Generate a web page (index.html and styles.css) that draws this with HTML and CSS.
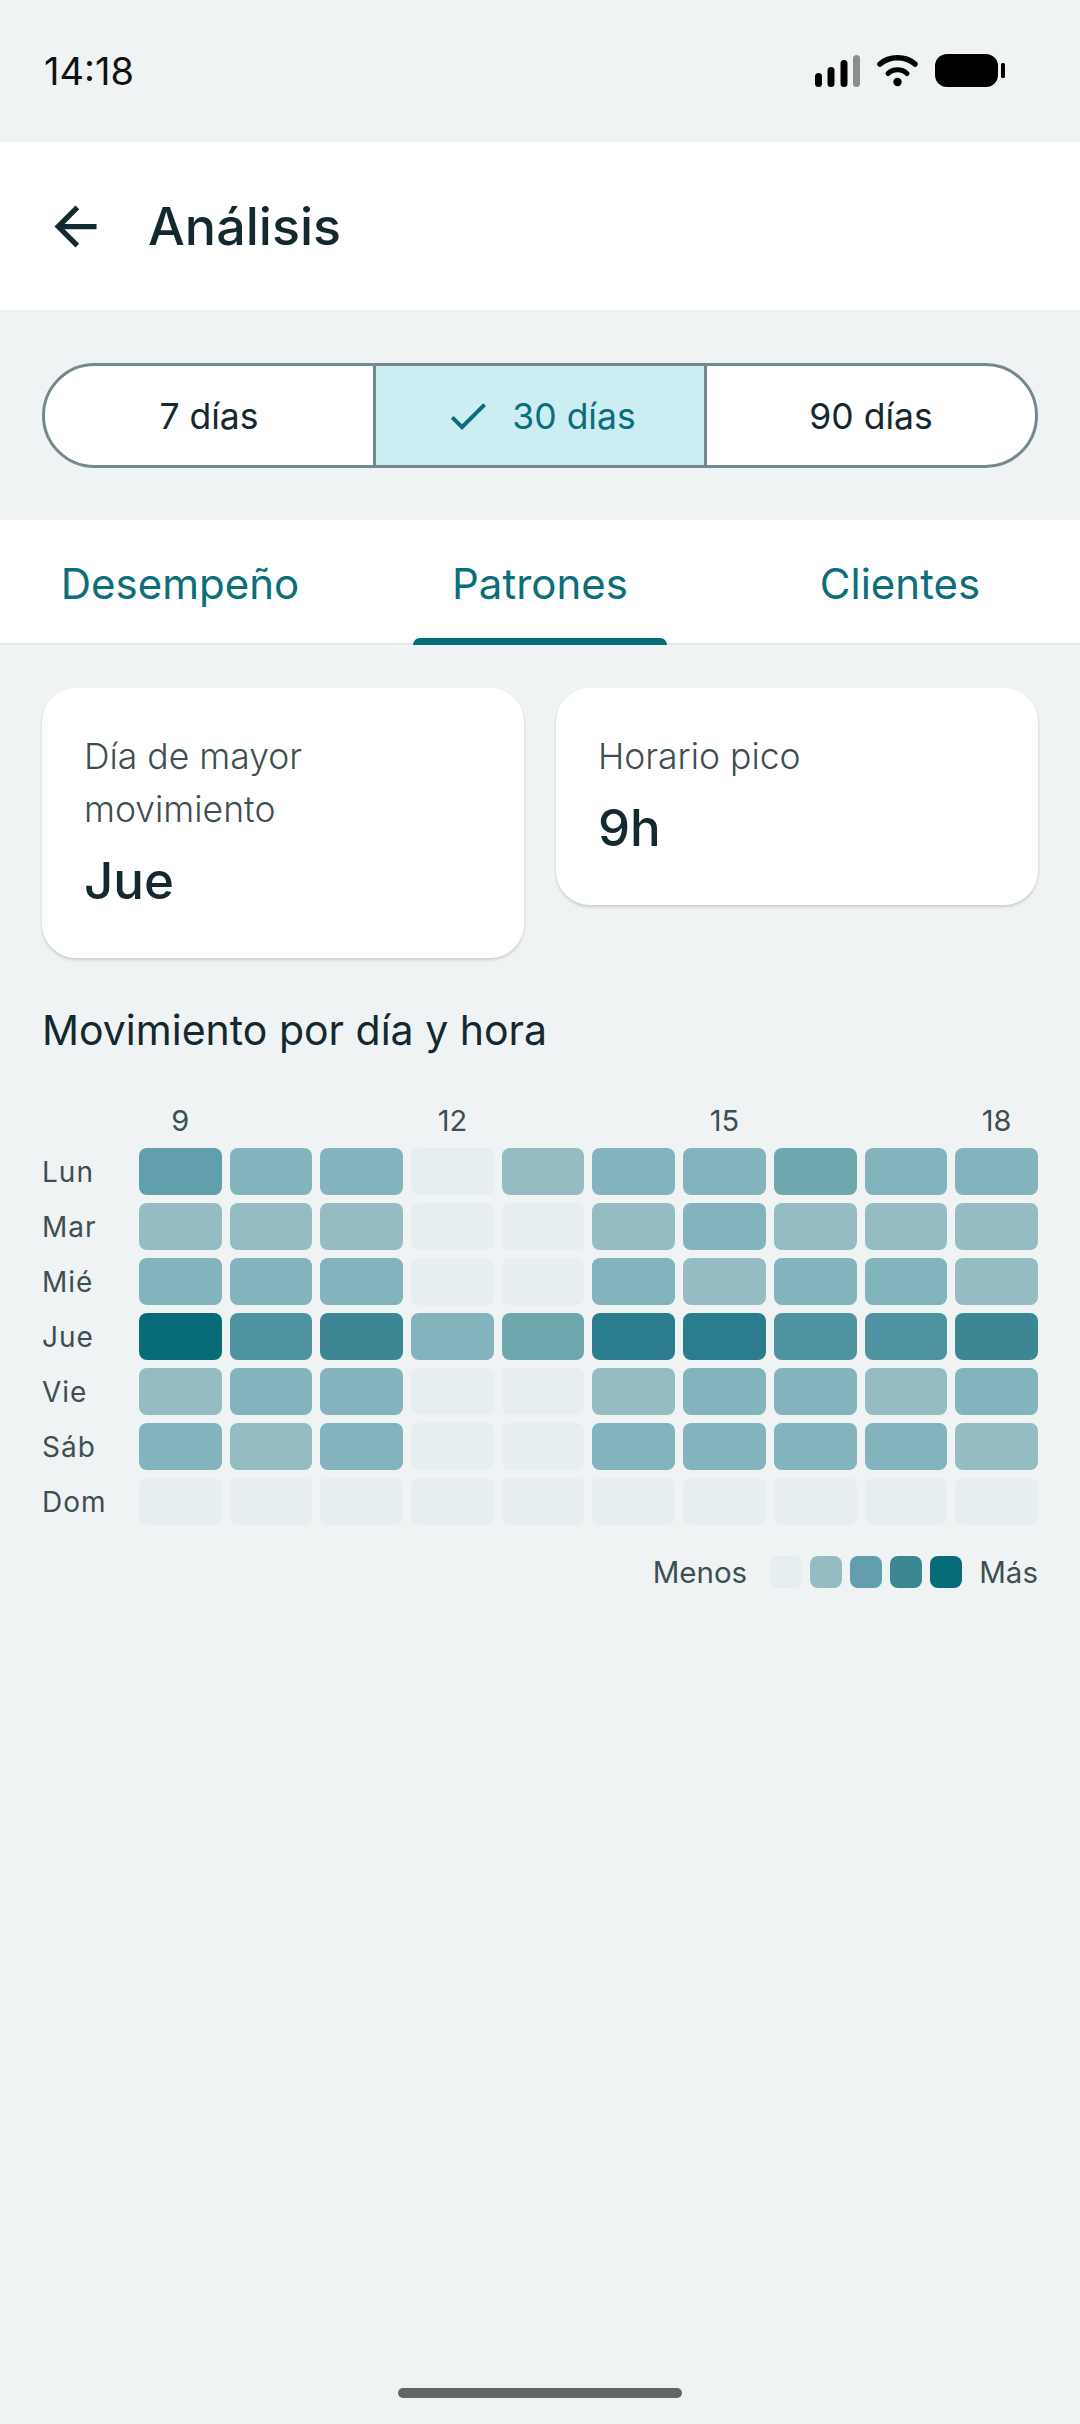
FILE: index.html
```html
<!DOCTYPE html>
<html lang="es">
<head>
    <meta charset="UTF-8">
    <meta name="viewport" content="width=device-width, initial-scale=1.0">
    <title>Análisis</title>
    <link rel="stylesheet" href="styles.css">
</head>
<body>
    <div class="status-bar">
        <span class="clock">14:18</span>
        <svg class="status-icons" width="190" height="36" viewBox="0 0 190 36">
            <rect x="0" y="20" width="7" height="14" rx="3.500"/>
            <rect x="12.500" y="14" width="7" height="20" rx="3.500"/>
            <rect x="25.500" y="7" width="7" height="27" rx="3.500"/>
            <rect x="38" y="2" width="7" height="32" rx="3.500" fill="#8a8f8e"/>
            <path d="M65 11C74 2.500 91 2.500 100 11" fill="none" stroke="#000" stroke-width="5.500" stroke-linecap="round"/>
            <path d="M73 20.500C78 15.500 87 15.500 92 20.500" fill="none" stroke="#000" stroke-width="5" stroke-linecap="round"/>
            <circle cx="82.500" cy="29" r="4.200"/>
            <rect x="120" y="1" width="63" height="33" rx="12"/>
            <rect x="186" y="10" width="4" height="15" rx="1.500"/>
        </svg>
    </div>

    <header class="app-bar">
        <svg class="back-icon" width="63" height="63" viewBox="0 0 24 24">
            <path d="M20 11H7.830l5.590-5.590L12 4l-8 8 8 8 1.410-1.410L7.830 13H20v-2z"/>
        </svg>
        <h1 class="app-title">Análisis</h1>
    </header>

    <div class="range-wrap">
        <div class="range">
            <div class="range-item">7 días</div>
            <div class="range-item range-item-on">
                <svg class="check-icon" width="48" height="48" viewBox="0 0 24 24">
                    <path d="M9 16.170L4.830 12l-1.420 1.410L9 19 21 7l-1.410-1.410z"/>
                </svg>
                30 días
            </div>
            <div class="range-item">90 días</div>
        </div>
    </div>

    <nav class="tabs">
        <div class="tab">Desempeño</div>
        <div class="tab tab-on">Patrones</div>
        <div class="tab">Clientes</div>
    </nav>

    <main class="content">
        <div class="stats">
            <div class="stat-card">
                <div class="stat-label">Día de mayor movimiento</div>
                <div class="stat-value">Jue</div>
            </div>
            <div class="stat-card">
                <div class="stat-label">Horario pico</div>
                <div class="stat-value">9h</div>
            </div>
        </div>

        <h2 class="section-title">Movimiento por día y hora</h2>

        <div class="heatmap">
            <div class="hours">
                <span>9</span><span></span><span></span>
                <span>12</span><span></span><span></span>
                <span>15</span><span></span><span></span>
                <span>18</span>
            </div>

            <div class="day">Lun</div>
            <div class="cells">
                <i class="h4"></i><i class="h2"></i><i class="h2"></i><i class="h0"></i><i class="h1"></i>
                <i class="h2"></i><i class="h2"></i><i class="h3"></i><i class="h2"></i><i class="h2"></i>
            </div>
            <div class="day">Mar</div>
            <div class="cells">
                <i class="h1"></i><i class="h1"></i><i class="h1"></i><i class="h0"></i><i class="h0"></i>
                <i class="h1"></i><i class="h2"></i><i class="h1"></i><i class="h1"></i><i class="h1"></i>
            </div>
            <div class="day">Mié</div>
            <div class="cells">
                <i class="h2"></i><i class="h2"></i><i class="h2"></i><i class="h0"></i><i class="h0"></i>
                <i class="h2"></i><i class="h1"></i><i class="h2"></i><i class="h2"></i><i class="h1"></i>
            </div>
            <div class="day">Jue</div>
            <div class="cells">
                <i class="h8"></i><i class="h5"></i><i class="h6"></i><i class="h2"></i><i class="h3"></i>
                <i class="h7"></i><i class="h7"></i><i class="h5"></i><i class="h5"></i><i class="h6"></i>
            </div>
            <div class="day">Vie</div>
            <div class="cells">
                <i class="h1"></i><i class="h2"></i><i class="h2"></i><i class="h0"></i><i class="h0"></i>
                <i class="h1"></i><i class="h2"></i><i class="h2"></i><i class="h1"></i><i class="h2"></i>
            </div>
            <div class="day">Sáb</div>
            <div class="cells">
                <i class="h2"></i><i class="h1"></i><i class="h2"></i><i class="h0"></i><i class="h0"></i>
                <i class="h2"></i><i class="h2"></i><i class="h2"></i><i class="h2"></i><i class="h1"></i>
            </div>
            <div class="day">Dom</div>
            <div class="cells">
                <i class="h0"></i><i class="h0"></i><i class="h0"></i><i class="h0"></i><i class="h0"></i>
                <i class="h0"></i><i class="h0"></i><i class="h0"></i><i class="h0"></i><i class="h0"></i>
            </div>
        </div>

        <div class="legend">
            <span class="legend-text legend-less">Menos</span>
            <i class="swatch h0"></i>
            <i class="swatch h1"></i>
            <i class="swatch h4"></i>
            <i class="swatch h6"></i>
            <i class="swatch h8"></i>
            <span class="legend-text legend-more">Más</span>
        </div>
    </main>

    <div class="home-bar"></div>
</body>
</html>
```

FILE: styles.css
```css
* {
    box-sizing: border-box;
}

body {
    margin: 0;
    width: 1080px;
    height: 2424px;
    display: flex;
    flex-direction: column;
    background-color: #eff3f4;
    color: #14292f;
    font-family: Inter, "Noto Sans", sans-serif;
}

.status-bar {
    height: 142px;
    display: flex;
    align-items: center;
    justify-content: space-between;
    padding: 0 75px 0 44px;
}

.clock {
    font-size: 38px;
    color: #111;
}

.status-icons {
    display: block;
}

.app-bar {
    height: 168px;
    display: flex;
    align-items: center;
    gap: 41px;
    padding-left: 44px;
    background-color: #fff;
}

.back-icon {
    fill: #14292f;
}

.app-title {
    margin: 0;
    font-size: 52px;
    font-weight: 500;
}

.range-wrap {
    padding: 53px 42px 52px;
}

.range {
    height: 105px;
    display: flex;
    border: 3px solid #74898d;
    border-radius: 53px;
    background-color: #fff;
    overflow: hidden;
}

.range-item {
    flex: 1;
    display: flex;
    align-items: center;
    justify-content: center;
    gap: 20px;
    padding-top: 1px;
    font-size: 35.500px;
}

.range-item + .range-item {
    border-left: 3px solid #74898d;
}

.range-item-on {
    background-color: #cceef3;
    color: #0b6e7a;
}

.check-icon {
    fill: #0b6e7a;
}

.tabs {
    height: 125px;
    display: flex;
    background-color: #fff;
    border-bottom: 2px solid #e3e7e8;
}

.tab {
    flex: 1;
    display: flex;
    align-items: center;
    justify-content: center;
    padding-top: 3px;
    position: relative;
    font-size: 42px;
    color: #0b6e7a;
}

.tab-on::after {
    content: "";
    position: absolute;
    left: 53px;
    right: 53px;
    bottom: -2px;
    height: 7px;
    border-radius: 7px 7px 0 0;
    background-color: #076b78;
}

.content {
    padding: 43px 42px 0;
}

.stats {
    display: flex;
    align-items: flex-start;
    gap: 32px;
}

.stat-card {
    flex: 1;
    padding: 42px 42px 48px;
    border-radius: 34px;
    background-color: #fff;
    box-shadow: 0 2px 3px rgba(20, 41, 47, 0.18);
}

.stat-label {
    font-size: 35.500px;
    line-height: 53px;
    font-weight: 300;
    color: #3e4f52;
}

.stat-value {
    margin-top: 16px;
    font-size: 51px;
    line-height: 58px;
    font-weight: 500;
}

.section-title {
    margin: 47px 0 0;
    font-size: 41px;
    line-height: 50px;
    font-weight: 400;
}

.heatmap {
    margin-top: 49px;
    display: grid;
    grid-template-columns: 97px 1fr;
    row-gap: 8px;
    align-items: center;
}

.hours {
    grid-column: 2;
    display: grid;
    grid-template-columns: repeat(10, 1fr);
    column-gap: 8px;
    padding-bottom: 2px;
    font-size: 29px;
    line-height: 34px;
    text-align: center;
    color: #3e4f52;
}

.day {
    font-size: 28px;
    letter-spacing: 1px;
    color: #3e4f52;
}

.cells {
    display: grid;
    grid-template-columns: repeat(10, 1fr);
    column-gap: 8px;
}

.cells i {
    height: 47px;
    border-radius: 8px;
}

.h0 { background-color: #e7eeef; }
.h1 { background-color: #95bcc3; }
.h2 { background-color: #83b3bc; }
.h3 { background-color: #6fa7af; }
.h4 { background-color: #609fab; }
.h5 { background-color: #4f93a0; }
.h6 { background-color: #3b8794; }
.h7 { background-color: #2b7d8e; }
.h8 { background-color: #076b78; }

.legend {
    margin-top: 31px;
    display: flex;
    align-items: center;
    justify-content: flex-end;
    gap: 8px;
}

.legend-text {
    font-size: 29.500px;
    line-height: 32px;
    color: #3e4f52;
}

.legend-less {
    margin-right: 15px;
}

.legend-more {
    margin-left: 9px;
}

.swatch {
    width: 32px;
    height: 32px;
    border-radius: 8px;
}

.home-bar {
    width: 284px;
    height: 10px;
    margin: auto auto 26px;
    border-radius: 5px;
    background-color: #626665;
}
```
